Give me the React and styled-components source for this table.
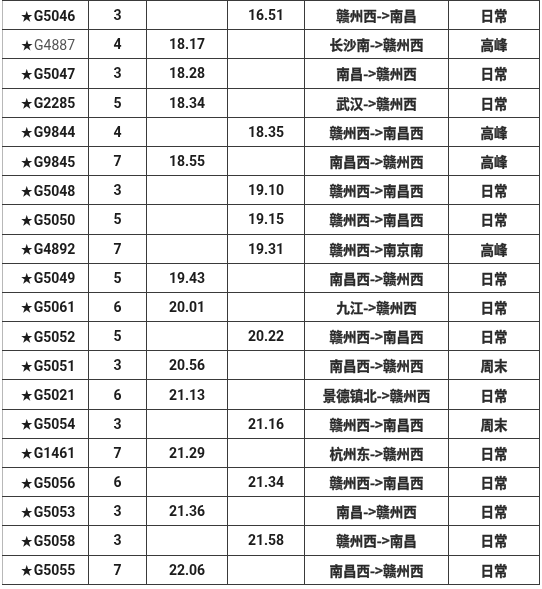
import React from 'react';
import styled, { createGlobalStyle } from 'styled-components';

const GlobalStyle = createGlobalStyle`
  html, body {
    margin: 0;
    padding: 0;
    background: #ffffff;
  }
  body {
    font-family: Roboto, "Noto Sans CJK SC", sans-serif;
  }
`;

const Page = styled.div`
  width: 542px;
  height: 589px;
  padding-left: 2px;
  box-sizing: border-box;
  background: #ffffff;
  overflow: hidden;
`;

const Table = styled.table`
  table-layout: fixed;
  border-collapse: collapse;
  width: 537px;
  filter: blur(0.35px);
`;

const Row = styled.tr`
  height: 29.2px;
`;

const Cell = styled.td`
  border: 1.5px solid #3a3a3a;
  border-left-color: ${props => props.first ? '#b8b8b8' : '#3a3a3a'};
  padding: 0 0 0 ${props => props.first ? '5px' : '0'};
  text-align: center;
  vertical-align: middle;
  font-family: Roboto, "Noto Sans CJK SC", sans-serif;
  font-size: 14px;
  font-weight: ${props => props.light ? 400 : 700};
  color: ${props => props.light ? '#555555' : '#1c1c1c'};
  white-space: nowrap;
`;

const RouteCell = styled(Cell)`
  font-family: "Noto Sans CJK SC", sans-serif;
  font-size: 13.5px;
  color: #2a2a2a;
  -webkit-text-stroke: 0.3px #2a2a2a;
`;

const Star = styled.span`
  font-size: 12px;
  margin-right: 1px;
  color: #1c1c1c;
`;

const widths = [86, 58, 81, 77, 144, 91];

const rows = [
  ['G5046', '3', '', '16.51', '赣州西->南昌', '日常'],
  ['G4887', '4', '18.17', '', '长沙南->赣州西', '高峰', true],
  ['G5047', '3', '18.28', '', '南昌->赣州西', '日常'],
  ['G2285', '5', '18.34', '', '武汉->赣州西', '日常'],
  ['G9844', '4', '', '18.35', '赣州西->南昌西', '高峰'],
  ['G9845', '7', '18.55', '', '南昌西->赣州西', '高峰'],
  ['G5048', '3', '', '19.10', '赣州西->南昌西', '日常'],
  ['G5050', '5', '', '19.15', '赣州西->南昌西', '日常'],
  ['G4892', '7', '', '19.31', '赣州西->南京南', '高峰'],
  ['G5049', '5', '19.43', '', '南昌西->赣州西', '日常'],
  ['G5061', '6', '20.01', '', '九江->赣州西', '日常'],
  ['G5052', '5', '', '20.22', '赣州西->南昌西', '日常'],
  ['G5051', '3', '20.56', '', '南昌西->赣州西', '周末'],
  ['G5021', '6', '21.13', '', '景德镇北->赣州西', '日常'],
  ['G5054', '3', '', '21.16', '赣州西->南昌西', '周末'],
  ['G1461', '7', '21.29', '', '杭州东->赣州西', '日常'],
  ['G5056', '6', '', '21.34', '赣州西->南昌西', '日常'],
  ['G5053', '3', '21.36', '', '南昌->赣州西', '日常'],
  ['G5058', '3', '', '21.58', '赣州西->南昌', '日常'],
  ['G5055', '7', '22.06', '', '南昌西->赣州西', '日常'],
];

const App = () => {
  return (
    <Page>
      <GlobalStyle />
      <Table>
        <colgroup>
          {widths.map((w, i) => <col key={i} style={{ width: w }} />)}
        </colgroup>
        <tbody>
          {rows.map(([train, cars, arrive, depart, route, kind, light]) => (
            <Row key={train}>
              <Cell first light={light}><Star>★</Star>{train}</Cell>
              <Cell>{cars}</Cell>
              <Cell>{arrive}</Cell>
              <Cell>{depart}</Cell>
              <RouteCell>{route}</RouteCell>
              <RouteCell>{kind}</RouteCell>
            </Row>
          ))}
        </tbody>
      </Table>
    </Page>
  );
};

export default App;
